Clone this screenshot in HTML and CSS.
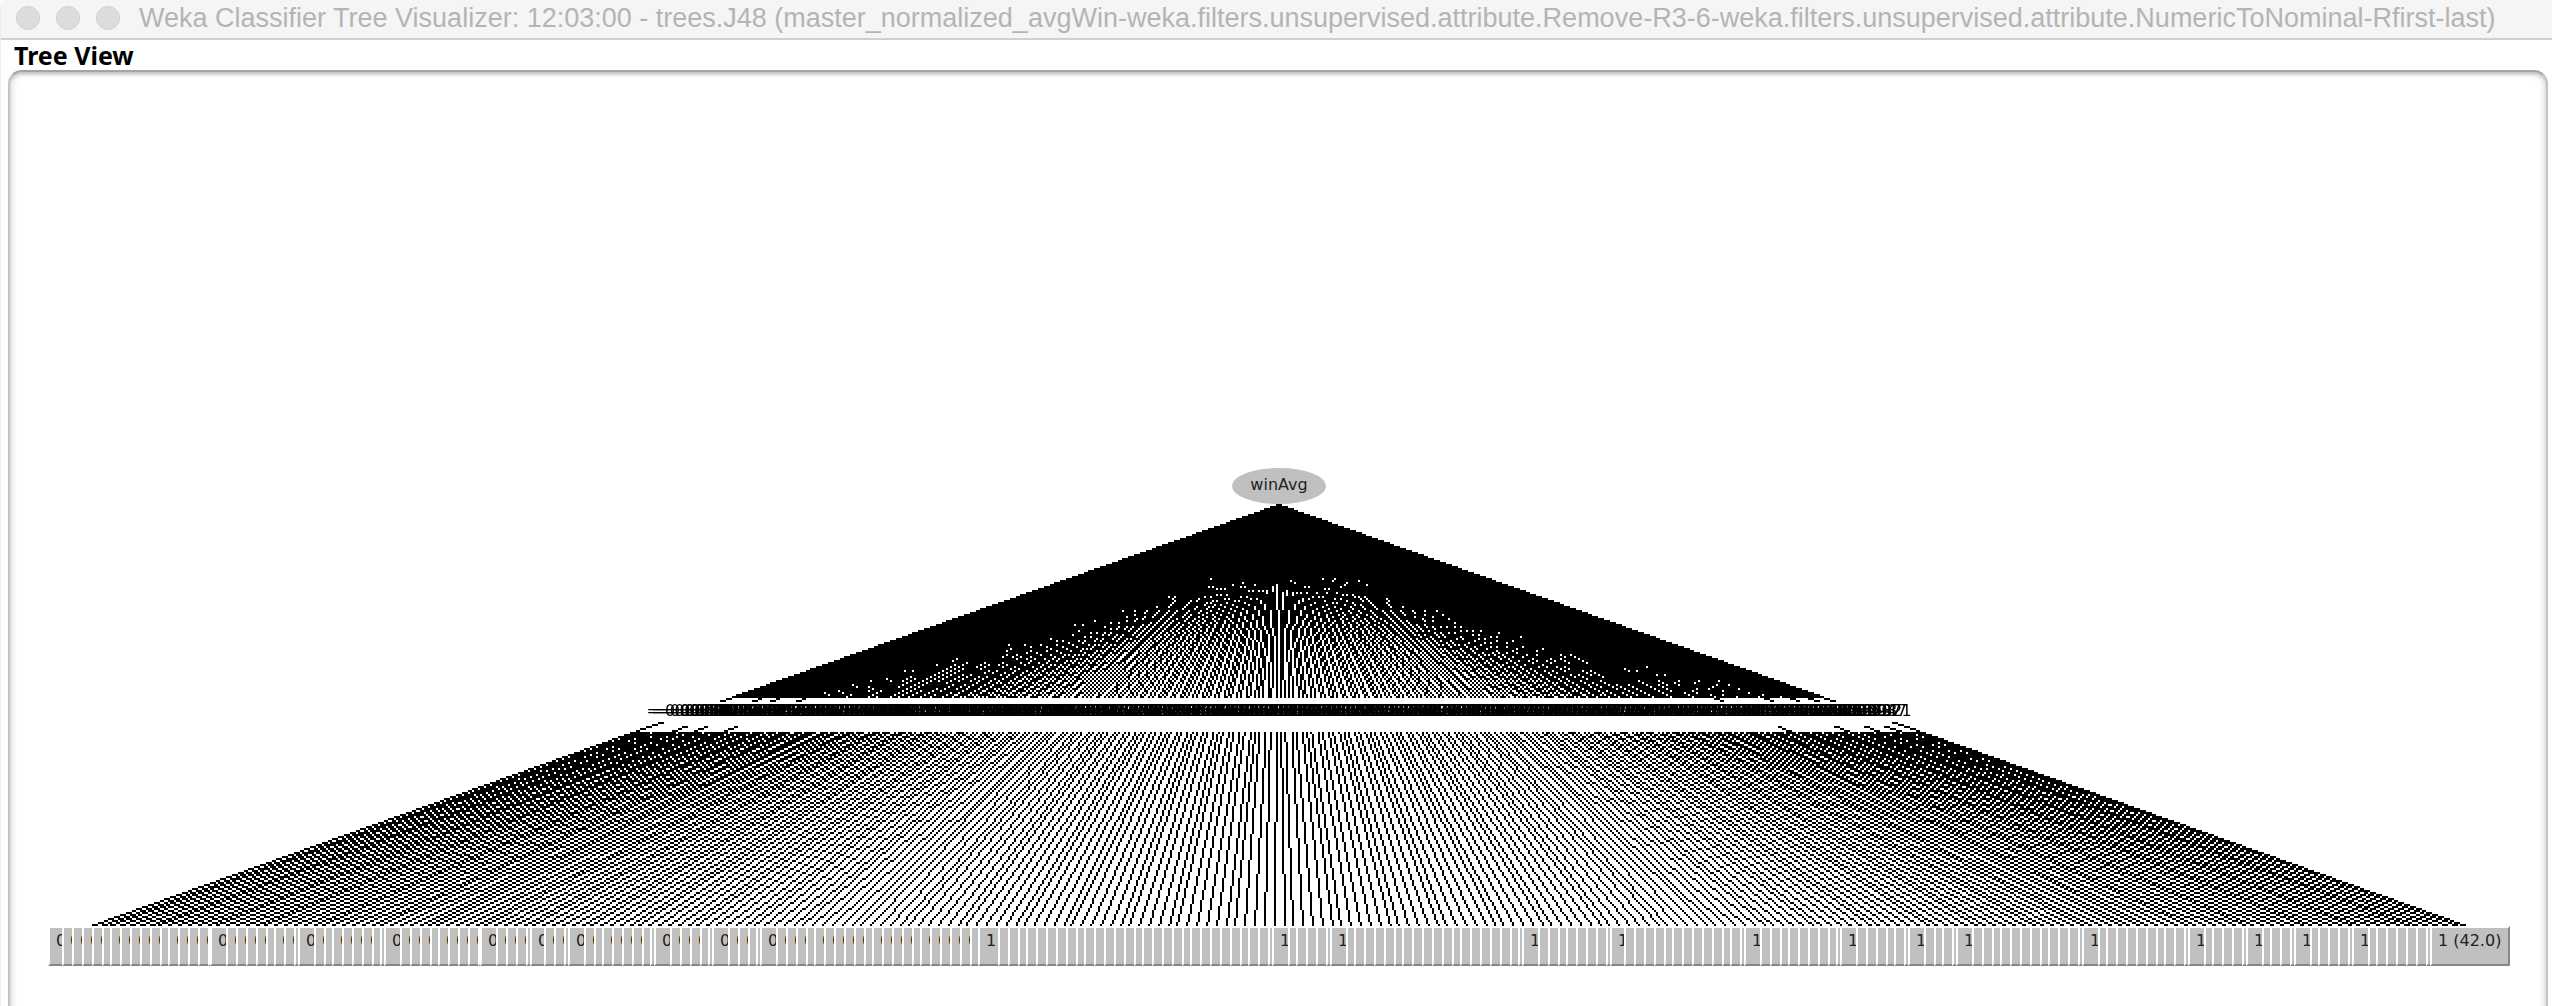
FILE: index.html
```html
<!DOCTYPE html>
<html lang="en">
<head>
<meta charset="utf-8">
<title>Weka Classifier Tree Visualizer</title>
<link rel="stylesheet" href="styles.css">
</head>
<body>
<div class="window">
  <header class="titlebar">
    <div class="lights">
      <button class="light" aria-label="Close"></button>
      <button class="light" aria-label="Minimize"></button>
      <button class="light" aria-label="Zoom"></button>
    </div>
    <h1 class="title">Weka Classifier Tree Visualizer: 12:03:00 - trees.J48 (master_normalized_avgWin-weka.filters.unsupervised.attribute.Remove-R3-6-weka.filters.unsupervised.attribute.NumericToNominal-Rfirst-last)</h1>
  </header>
  <h2 class="section">Tree View</h2>
  <main class="panel">
    <div class="tree">
      <div class="root">winAvg</div>
      <div class="edges" id="edges">
        <canvas class="lines" id="lines"></canvas>
      </div>
      <div class="leaves" id="leaves"></div>
    </div>
  </main>
</div>
<script src="tree.js"></script>
</body>
</html>
```
FILE: styles.css
```css
* { box-sizing: border-box; }
body {
  margin: 0;
  background: #fff;
  color: #000;
  font-family: "DejaVu Sans", sans-serif;
}
.window {
  display: flex;
  flex-direction: column;
  height: 100vh;
  overflow: hidden;
  border-left: 1px solid #ececec;
  border-top-left-radius: 8px;
}
.titlebar {
  display: flex;
  align-items: center;
  gap: 19px;
  height: 40px;
  flex: none;
  padding: 0 0 2px 15px;
  background: #f5f5f5;
  border-bottom: 2px solid #d0d0d0;
}
.lights { display: flex; gap: 16px; }
.light {
  width: 24px;
  height: 24px;
  padding: 0;
  border: 1px solid #d0d0d0;
  border-radius: 50%;
  background: #dcdcdc;
}
.title {
  margin: 0;
  font: 400 27px/38px "Liberation Sans", sans-serif;
  color: #b4b4b4;
  white-space: nowrap;
}
.section {
  flex: none;
  margin: 0;
  padding-left: 13px;
  height: 30px;
  font: 700 25px/30px "Noto Sans", sans-serif;
}
.panel {
  flex: 1;
  margin: 0 4px -20px 7px;
  padding: 396px 36px 0 38px;
  border: 2px solid #c3c3c3;
  border-top-color: #a4a4a6;
  border-radius: 14px;
  box-shadow: inset 0 2px 0 #cbcbcd, inset 0 4px 0 #e4e4e5, inset 0 0 7px #bbb;
}
.tree {
  display: flex;
  flex-direction: column;
  font-size: 16px;
}
.root {
  align-self: center;
  width: 94px;
  height: 36px;
  border-radius: 50%;
  background: #c0c0c0;
  color: #222;
  line-height: 34px;
  text-align: center;
}
.edges {
  position: relative;
  height: 422px;
}
.lines {
  position: absolute;
  inset: 0;
  width: 100%;
  height: 100%;
  image-rendering: pixelated;
}
.value {
  position: absolute;
  top: 197px;
  line-height: 20px;
  white-space: nowrap;
  transform: translateX(-50%);
}
.leaves {
  display: grid;
  height: 40px;
}
.leaf {
  min-width: 0;
  overflow: hidden;
  border: 0 solid #fff;
  border-width: 2px 0 2px 2px;
  border-bottom-color: #868686;
  background: #c0c0c0;
  color: #222;
  line-height: 26px;
  white-space: nowrap;
  text-indent: 6px;
}
.leaf:last-child { border-right: 2px solid #868686; }
```
FILE: tree.js
```js
// Tree units: one unit is two CSS pixels at the default window width.
const COUNT = 248;
const SPAN = 1231;
const STEP = 4.821;
const LEVEL = 211;
const MIDDLE = 105;
const FIRST_ONE = 97;
const WIDE = new Set([0, 17, 26, 35, 45, 50, 54, 63, 69, 74, 97, 127, 133, 153,
  162, 176, 186, 193, 198, 211, 222, 228, 233, 239, 247]);
const LONG = new Set([0, 7, 11, 17, 222, 233, 239, 243, 247]);

function leftOf(k) {
  if (k === COUNT) return SPAN;
  if (k === COUNT - 1) return 1191;
  if (k === FIRST_ONE - 1 || k === FIRST_ONE) return 465;
  return Math.floor((WIDE.has(k) ? 0.001 : 3.05) + STEP * k);
}

const leaves = document.getElementById('leaves');
const edges = document.getElementById('edges');
const columns = [];
for (let k = 0; k < COUNT; k++) {
  const units = leftOf(k + 1) - leftOf(k);
  if (units > 0) {
    const leaf = document.createElement('div');
    leaf.className = 'leaf';
    columns.push('minmax(0, ' + units + 'fr)');
    if (k === COUNT - 1) leaf.textContent = '1 (42.0)';
    else if (WIDE.has(k)) leaf.textContent = k < FIRST_ONE ? '0' : '1';
    else if (k < FIRST_ONE && units > 4) leaf.textContent = '0';
    leaves.append(leaf);
  }
  const value = document.createElement('span');
  value.className = 'value';
  value.textContent = '= ' + ((k + 1) * 0.002448).toFixed(4);
  value.style.left = (SPAN / 2 + 20.2 + STEP * k) / 2 / SPAN * 100 + '%';
  edges.append(value);
}
leaves.style.gridTemplateColumns = columns.join(' ');

const canvas = document.getElementById('lines');
const ctx = canvas.getContext('2d');

// Integer line between two points, drawn only for rows in [from, to).
function drawLine(x0, y0, x1, y1, from, to) {
  let x = x0, y = y0;
  const dx = Math.abs(x1 - x0), dy = y1 - y0, sx = x0 < x1 ? 1 : -1;
  let err = dx - dy;
  while (y < y1) {
    if (y >= from && y < to) ctx.fillRect(x, y, 1, 1);
    const e2 = 2 * err;
    if (e2 > -dy) { err -= dy; x += sx; }
    if (e2 < dx) { err += dx; y += 1; }
  }
}

// Each edge has an upper and a lower half, with a break for its value.
function draw() {
  const width = Math.round(edges.clientWidth / 2);
  const scale = width / SPAN;
  canvas.width = width;
  canvas.height = LEVEL;
  ctx.fillStyle = '#000';
  const start = Math.floor(615 * scale);
  for (let k = 0; k < COUNT; k++) {
    const end = Math.floor((20.2 + STEP * k) * scale);
    const mid = Math.floor((start + end) / 2);
    const long = LONG.has(k);
    const outer = k === 0 || k === COUNT - 1;
    drawLine(start, 0, mid, MIDDLE, 0, long ? 99 : 97);
    drawLine(mid, MIDDLE, end, LEVEL, outer ? 109 : long ? 111 : 114, LEVEL);
  }
}
draw();
window.addEventListener('resize', draw);
```
